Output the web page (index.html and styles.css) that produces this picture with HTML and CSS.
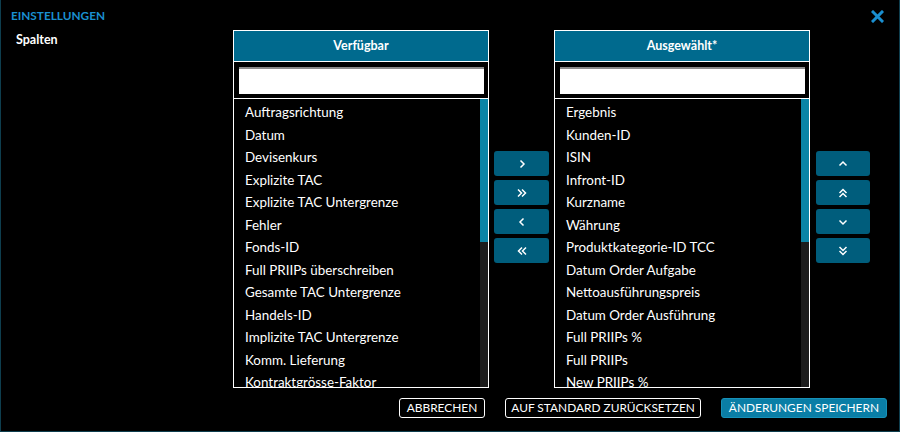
FILE: index.html
```html
<!DOCTYPE html>
<html lang="de">
<head>
<meta charset="utf-8">
<title>Einstellungen</title>
<link rel="stylesheet" href="styles.css">
</head>
<body>
<div class="dialog">
  <div class="header">
    <div class="title">EINSTELLUNGEN</div>
    <div class="close">
      <svg width="13" height="13" viewBox="0 0 13 13"><path d="M2 2 L11 11 M11 2 L2 11" stroke="#1a8fd0" stroke-width="3" stroke-linecap="square"/></svg>
    </div>
  </div>
  <div class="main">
    <div class="side">Spalten</div>
    <div class="panel">
      <div class="panel-head">Verfügbar</div>
      <div class="panel-search"><input class="search" type="text"></div>
      <div class="panel-list">
        <ul class="items">
          <li>Auftragsrichtung</li>
          <li>Datum</li>
          <li>Devisenkurs</li>
          <li>Explizite TAC</li>
          <li>Explizite TAC Untergrenze</li>
          <li>Fehler</li>
          <li>Fonds-ID</li>
          <li>Full PRIIPs überschreiben</li>
          <li>Gesamte TAC Untergrenze</li>
          <li>Handels-ID</li>
          <li>Implizite TAC Untergrenze</li>
          <li>Komm. Lieferung</li>
          <li>Kontraktgrösse-Faktor</li>
        </ul>
        <div class="scroll"><div class="thumb thumb-left"></div></div>
      </div>
    </div>
    <div class="btns">
      <div class="btn"><svg width="10" height="10" viewBox="0 0 10 10"><path d="M3.5 1.5 L7 5 L3.5 8.5" fill="none" stroke="#fff" stroke-width="1.5"/></svg></div>
      <div class="btn"><svg width="12" height="10" viewBox="0 0 12 10"><path d="M2 1.5 L5.5 5 L2 8.5 M6 1.5 L9.5 5 L6 8.5" fill="none" stroke="#fff" stroke-width="1.5"/></svg></div>
      <div class="btn"><svg width="10" height="10" viewBox="0 0 10 10"><path d="M6.5 1.5 L3 5 L6.5 8.5" fill="none" stroke="#fff" stroke-width="1.5"/></svg></div>
      <div class="btn"><svg width="12" height="10" viewBox="0 0 12 10"><path d="M10 1.5 L6.5 5 L10 8.5 M6 1.5 L2.5 5 L6 8.5" fill="none" stroke="#fff" stroke-width="1.5"/></svg></div>
    </div>
    <div class="panel">
      <div class="panel-head">Ausgewählt*</div>
      <div class="panel-search"><input class="search" type="text"></div>
      <div class="panel-list">
        <ul class="items">
          <li>Ergebnis</li>
          <li>Kunden-ID</li>
          <li>ISIN</li>
          <li>Infront-ID</li>
          <li>Kurzname</li>
          <li>Währung</li>
          <li>Produktkategorie-ID TCC</li>
          <li>Datum Order Aufgabe</li>
          <li>Nettoausführungspreis</li>
          <li>Datum Order Ausführung</li>
          <li>Full PRIIPs %</li>
          <li>Full PRIIPs</li>
          <li>New PRIIPs %</li>
        </ul>
        <div class="scroll"><div class="thumb thumb-right"></div></div>
      </div>
    </div>
    <div class="btns btns-right">
      <div class="btn"><svg width="10" height="10" viewBox="0 0 10 10"><path d="M1.5 6.5 L5 3 L8.5 6.5" fill="none" stroke="#fff" stroke-width="1.5"/></svg></div>
      <div class="btn"><svg width="10" height="12" viewBox="0 0 10 12"><path d="M1.5 6 L5 2.5 L8.5 6 M1.5 10 L5 6.5 L8.5 10" fill="none" stroke="#fff" stroke-width="1.5"/></svg></div>
      <div class="btn"><svg width="10" height="10" viewBox="0 0 10 10"><path d="M1.5 3.5 L5 7 L8.5 3.5" fill="none" stroke="#fff" stroke-width="1.5"/></svg></div>
      <div class="btn"><svg width="10" height="12" viewBox="0 0 10 12"><path d="M1.5 2 L5 5.5 L8.5 2 M1.5 6 L5 9.5 L8.5 6" fill="none" stroke="#fff" stroke-width="1.5"/></svg></div>
    </div>
  </div>
  <div class="footer">
    <div class="fbtn">ABBRECHEN</div>
    <div class="fbtn fbtn-wide">AUF STANDARD ZURÜCKSETZEN</div>
    <div class="fbtn fbtn-primary">ÄNDERUNGEN SPEICHERN</div>
  </div>
</div>
</body>
</html>
```

FILE: styles.css
```css
html, body {
  margin: 0;
  padding: 0;
  background: #000;
}
body {
  font-family: Lato, "Noto Sans", sans-serif;
  color: #fff;
}
.dialog {
  box-sizing: border-box;
  width: 900px;
  height: 432px;
  border-left: 1px solid #0e3e4e;
  border-right: 1px solid #0e3e4e;
  border-bottom: 1px solid #0e3e4e;
  padding: 5px 11px 0 10px;
  display: flex;
  flex-direction: column;
}
.header {
  display: flex;
  justify-content: space-between;
  align-items: center;
  height: 21px;
}
.title {
  color: #1a8fd0;
  font-weight: bold;
  font-size: 11.8px;
  line-height: 21px;
}
.close {
  display: flex;
  margin-right: 4px;
  margin-top: 1px;
}
.main {
  display: flex;
  margin-top: 4px;
  height: 358px;
}
.side {
  width: 222px;
  padding-left: 5px;
  box-sizing: border-box;
  font-weight: bold;
  font-size: 12.5px;
  line-height: 19px;
}
.panel {
  width: 256px;
  box-sizing: border-box;
  border: 1px solid #fff;
  display: flex;
  flex-direction: column;
}
.panel-head {
  height: 30px;
  background: #006a8e;
  border-bottom: 1px solid #fff;
  text-align: center;
  font-weight: bold;
  font-size: 12.5px;
  line-height: 30px;
}
.panel-search {
  height: 37px;
  border-bottom: 1px solid #fff;
  padding: 5px 4px 0 5px;
  box-sizing: border-box;
}
.search {
  display: block;
  box-sizing: border-box;
  width: 245px;
  height: 27px;
  margin: 0;
  background: #fff;
  border: none;
  border-top: 2px solid #8a8a8a;
  outline: none;
}
.panel-list {
  flex: 1;
  display: flex;
  overflow: hidden;
}
.items {
  flex: 1;
  list-style: none;
  margin: 0;
  padding: 2px 0 0 11px;
  font-size: 13.4px;
  line-height: 22.5px;
  overflow: hidden;
  white-space: nowrap;
}
.scroll {
  width: 8px;
  background: #1c1c1c;
}
.thumb {
  background: #0a84a6;
}
.thumb-left {
  height: 143px;
}
.thumb-right {
  height: 143px;
}
.btns {
  display: flex;
  flex-direction: column;
  gap: 4px;
  width: 55px;
  margin: 121px 5px 0 5px;
}
.btns-right {
  width: 54px;
  margin: 121px 0 0 6px;
}
.btn {
  height: 25px;
  background: #005d7c;
  border-radius: 3px;
  display: flex;
  align-items: center;
  justify-content: center;
}
.btn svg {
  display: block;
}
.footer {
  display: flex;
  justify-content: flex-end;
  gap: 20px;
  margin-top: 10px;
  padding-right: 1px;
}
.fbtn {
  box-sizing: border-box;
  height: 20px;
  border: 1px solid #fff;
  border-radius: 3px;
  padding: 0 7px;
  font-size: 11.9px;
  line-height: 18px;
  color: #fff;
}
.fbtn-wide {
  padding: 0 5px;
}
.fbtn-primary {
  background: #0a7ea6;
  border-color: #1791b8;
}
```
